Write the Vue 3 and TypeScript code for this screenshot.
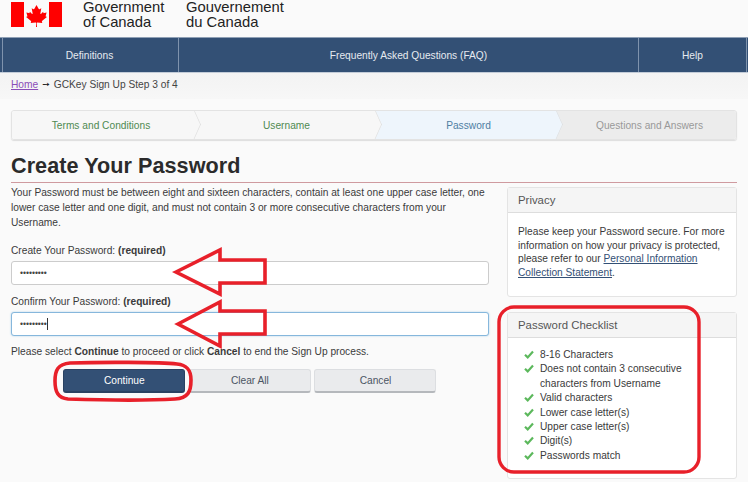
<template>
  <div class="page">
    <header class="brand">
      <svg class="flag" width="52" height="26" viewBox="0 0 52 26">
        <rect x="0" y="1" width="13" height="25" fill="#f00" />
        <rect x="38" y="1" width="13" height="25" fill="#f00" />
        <path
          fill="#f00"
          d="M25.5 4 L23.4 7.8 C23 8.4 22.6 8.3 22 8 L20.7 7.3 L21.6 12.2 C21.8 13.1 21.2 13.2 20.8 12.7 L18.9 10.7 L18.6 11.8 C18.5 12.1 18.2 12.2 17.8 12.1 L15.4 11.6 L16.2 14.5 C16.4 15.1 16.5 15.4 16 15.6 L15.1 16 L19.7 19.8 C20.1 20.1 20.2 20.4 20.1 20.8 L19.7 22.1 C21.3 21.9 23 21.7 24.7 21.5 C25 21.5 25.2 21.7 25.2 22 L25 26 L26 26 L25.8 22 C25.8 21.7 26 21.5 26.3 21.5 C28 21.7 29.7 21.9 31.3 22.1 L30.9 20.8 C30.8 20.4 30.9 20.1 31.3 19.8 L35.9 16 L35 15.6 C34.5 15.4 34.6 15.1 34.8 14.5 L35.6 11.6 L33.2 12.1 C32.8 12.2 32.5 12.1 32.4 11.8 L32.1 10.7 L30.2 12.7 C29.8 13.2 29.2 13.1 29.4 12.2 L30.3 7.3 L29 8 C28.4 8.3 28 8.4 27.6 7.8 Z"
        />
      </svg>
      <div class="brand-name en">Government<br />of Canada</div>
      <div class="brand-name fr">Gouvernement<br />du Canada</div>
    </header>

    <nav class="topnav">
      <a v-for="item in navItems" :key="item.label" :class="item.cls">{{ item.label }}</a>
    </nav>

    <div class="crumbs">
      <a class="home">Home</a>
      <span class="crumb-arrow">➙</span>
      <span>GCKey Sign Up Step 3 of 4</span>
    </div>

    <main class="content">
      <ol class="steps">
        <li v-for="step in steps" :key="step.label" class="step" :class="step.state">
          {{ step.label }}
        </li>
      </ol>

      <h1>Create Your Password</h1>

      <div class="columns">
        <section class="form-col">
          <p class="intro">
            Your Password must be between eight and sixteen characters, contain at least one upper case
            letter, one lower case letter and one digit, and must not contain 3 or more consecutive
            characters from your Username.
          </p>

          <label class="field-label">Create Your Password: <strong>(required)</strong></label>
          <div class="input">•••••••••</div>

          <label class="field-label">Confirm Your Password: <strong>(required)</strong></label>
          <div class="input focused">•••••••••<span class="caret"></span></div>

          <p class="hint">
            Please select <strong>Continue</strong> to proceed or click <strong>Cancel</strong> to end
            the Sign Up process.
          </p>

          <div class="actions">
            <button class="btn primary" type="button">Continue</button>
            <button class="btn" type="button">Clear All</button>
            <button class="btn" type="button">Cancel</button>
          </div>
        </section>

        <aside class="side-col">
          <div class="panel privacy">
            <div class="panel-head">Privacy</div>
            <div class="panel-body">
              Please keep your Password secure. For more information on how your privacy is protected,
              please refer to our <a class="link">Personal Information Collection Statement</a>.
            </div>
          </div>

          <div class="panel checklist">
            <div class="panel-head">Password Checklist</div>
            <ul class="panel-body checks">
              <li v-for="check in checks" :key="check">
                <svg class="tick" width="10" height="9" viewBox="0 0 10 9">
                  <path d="M1 4.8 L3.7 7.4 L9 1.6" fill="none" stroke="#5cb85c" stroke-width="2.2" />
                </svg>
                <span>{{ check }}</span>
              </li>
            </ul>
          </div>
        </aside>
      </div>
    </main>

    <!-- red annotations drawn over the page -->
    <svg class="marks" width="748" height="482" viewBox="0 0 748 482">
      <g fill="none" stroke="#e8202a" stroke-width="3.6">
        <path d="M176 272 L220 250 V260 H265 V283 H220 V294 Z" />
        <path d="M178 324 L220 302 V311 H265 V334 H220 V346 Z" />
        <path
          d="M70 363 C100 362 160 362 177 364 C187 365 191 370 191 380 C191 392 188 398 175 399 C140 401 100 400 68 399 C58 398 55 392 55 381 C55 370 58 364 70 363 Z"
        />
        <rect x="499" y="307" width="200" height="165" rx="15" stroke-width="3.4" />
      </g>
    </svg>
  </div>
</template>

<script setup lang="ts">
const navItems = [
  { label: 'Definitions', cls: 'nav-defs' },
  { label: 'Frequently Asked Questions (FAQ)', cls: 'nav-faq' },
  { label: 'Help', cls: 'nav-help' },
];

const steps = [
  { label: 'Terms and Conditions', state: 'done' },
  { label: 'Username', state: 'done' },
  { label: 'Password', state: 'current' },
  { label: 'Questions and Answers', state: 'todo' },
];

const checks = [
  '8-16 Characters',
  'Does not contain 3 consecutive characters from Username',
  'Valid characters',
  'Lower case letter(s)',
  'Upper case letter(s)',
  'Digit(s)',
  'Passwords match',
];
</script>

<style>
html,
body {
  margin: 0;
  background: #fafafa;
}
</style>

<style scoped>
.page {
  position: relative;
  width: 748px;
  height: 482px;
  overflow: hidden;
  background: #fafafa;
  color: #3a3a3a;
  font-family: 'Liberation Sans', Arial, sans-serif;
  font-size: 10.2px;
}

.brand {
  display: flex;
  height: 37px;
  padding-left: 11px;
  box-sizing: border-box;
}

.flag {
  margin: 1px 20px 0 0;
}

.brand-name {
  font-size: 14.8px;
  line-height: 15px;
  color: #222;
}

.brand-name.en {
  width: 103px;
}

.topnav {
  display: flex;
  height: 36px;
  box-sizing: border-box;
  padding-left: 2px;
  background: #335075;
  border-top: 1px solid #8fa0b5;
  border-bottom: 1px solid #c3ccd8;
  color: #e6eaf0;
}

.topnav a {
  display: flex;
  align-items: center;
  justify-content: center;
  border-left: 1px solid #7f93ad;
  box-sizing: border-box;
}

.nav-defs {
  width: 176px;
  padding-right: 2px;
}

.nav-faq {
  width: 460px;
}

.nav-help {
  width: 109px;
  border-right: 1px solid #7f93ad;
}

.crumbs {
  display: flex;
  align-items: center;
  gap: 4px;
  height: 26px;
  padding: 0 11px 4px;
  box-sizing: border-box;
  background: linear-gradient(#f3f3f3, #f7f7f7);
  color: #444;
}

.home {
  color: #8a4db8;
  text-decoration: underline;
}

.crumb-arrow {
  font-family: 'DejaVu Sans', sans-serif;
  font-size: 9px;
  color: #222;
}

.content {
  padding: 11px 11px 0;
  background: #fafafa;
}

.steps {
  display: flex;
  list-style: none;
  margin: 0;
  padding: 0;
  height: 30px;
  box-sizing: border-box;
  border: 1px solid #e3e3e3;
  border-radius: 3px;
  box-shadow: 0 1px 1px #ddd;
  overflow: hidden;
}

.step {
  position: relative;
  flex: none;
  width: 181px;
  box-sizing: border-box;
  display: flex;
  align-items: center;
  justify-content: center;
  padding-left: 8px;
  background: #f7f7f7;
}

.step:first-child {
  padding: 0 3px 0 0;
}

.step:nth-child(2) {
  padding-left: 6px;
}

.step::after {
  content: '';
  position: absolute;
  top: 2px;
  right: -12px;
  width: 22px;
  height: 22px;
  transform: scaleX(0.45) rotate(45deg);
  background: inherit;
  border-top: 1px solid #ddd;
  border-right: 1px solid #ddd;
  z-index: 1;
}

.step:last-child::after {
  display: none;
}

.step.done {
  color: #4f8a52;
}

.step.current {
  color: #4f7fa3;
  background: #eef5fc;
}

.step.todo {
  color: #999;
  background: #ececec;
}

h1 {
  margin: 13px 0 0;
  padding-bottom: 3px;
  font-size: 21.6px;
  line-height: 26px;
  font-weight: 700;
  letter-spacing: 0.05px;
  color: #2b2b2b;
  border-bottom: 1px solid #cf9a9f;
}

.columns {
  display: flex;
  justify-content: space-between;
}

.form-col {
  width: 478px;
}

.intro {
  margin: 3px 0 0;
  line-height: 14.8px;
}

.field-label {
  display: block;
  margin-top: 14px;
  line-height: 14px;
}

.input + .field-label {
  margin-top: 10px;
}

.input {
  display: flex;
  align-items: center;
  height: 24px;
  margin-top: 3px;
  padding-left: 8px;
  box-sizing: border-box;
  background: #fff;
  border: 1px solid #ccc;
  border-radius: 3px;
  font-size: 8.5px;
  color: #444;
}

.input.focused {
  border-color: #86b7dc;
  box-shadow: 0 0 2px #a8cfe8;
}

.caret {
  width: 1px;
  height: 12px;
  background: #333;
}

.hint {
  margin: 9px 0 0;
  line-height: 14px;
}

.actions {
  display: flex;
  gap: 3.6px;
  margin: 10px 0 0 52.3px;
}

.btn {
  width: 122px;
  height: 24px;
  padding: 0;
  border: 1px solid #dcdee1;
  border-bottom: 2px solid #b5b8bc;
  border-radius: 3px;
  background: #eaebed;
  color: #4b5563;
  font: inherit;
}

.btn.primary {
  background: #335075;
  border-color: #2a4262;
  color: #fff;
}

.side-col {
  width: 230px;
  margin-top: 4px;
}

.panel {
  border: 1px solid #e4e4e4;
  border-radius: 3px;
  background: #fff;
  box-sizing: border-box;
}

.panel-head {
  display: flex;
  align-items: center;
  height: 24px;
  padding-left: 10px;
  background: #f5f5f5;
  border-bottom: 1px solid #ddd;
  font-size: 11.4px;
  color: #555;
}

.panel-body {
  margin: 0;
  padding: 12px 10px;
  line-height: 13.7px;
}

.privacy {
  height: 110px;
}

.link {
  color: #335075;
  text-decoration: underline;
}

.checklist {
  height: 167px;
  margin-top: 15px;
}

.checks {
  list-style: none;
  padding: 10px 10px 0 16px;
  line-height: 14.4px;
}

.checks li {
  display: flex;
  gap: 6px;
  width: 176px;
}

.tick {
  flex: none;
  margin-top: 2px;
}

.marks {
  position: absolute;
  top: 0;
  left: 0;
  pointer-events: none;
}
</style>
